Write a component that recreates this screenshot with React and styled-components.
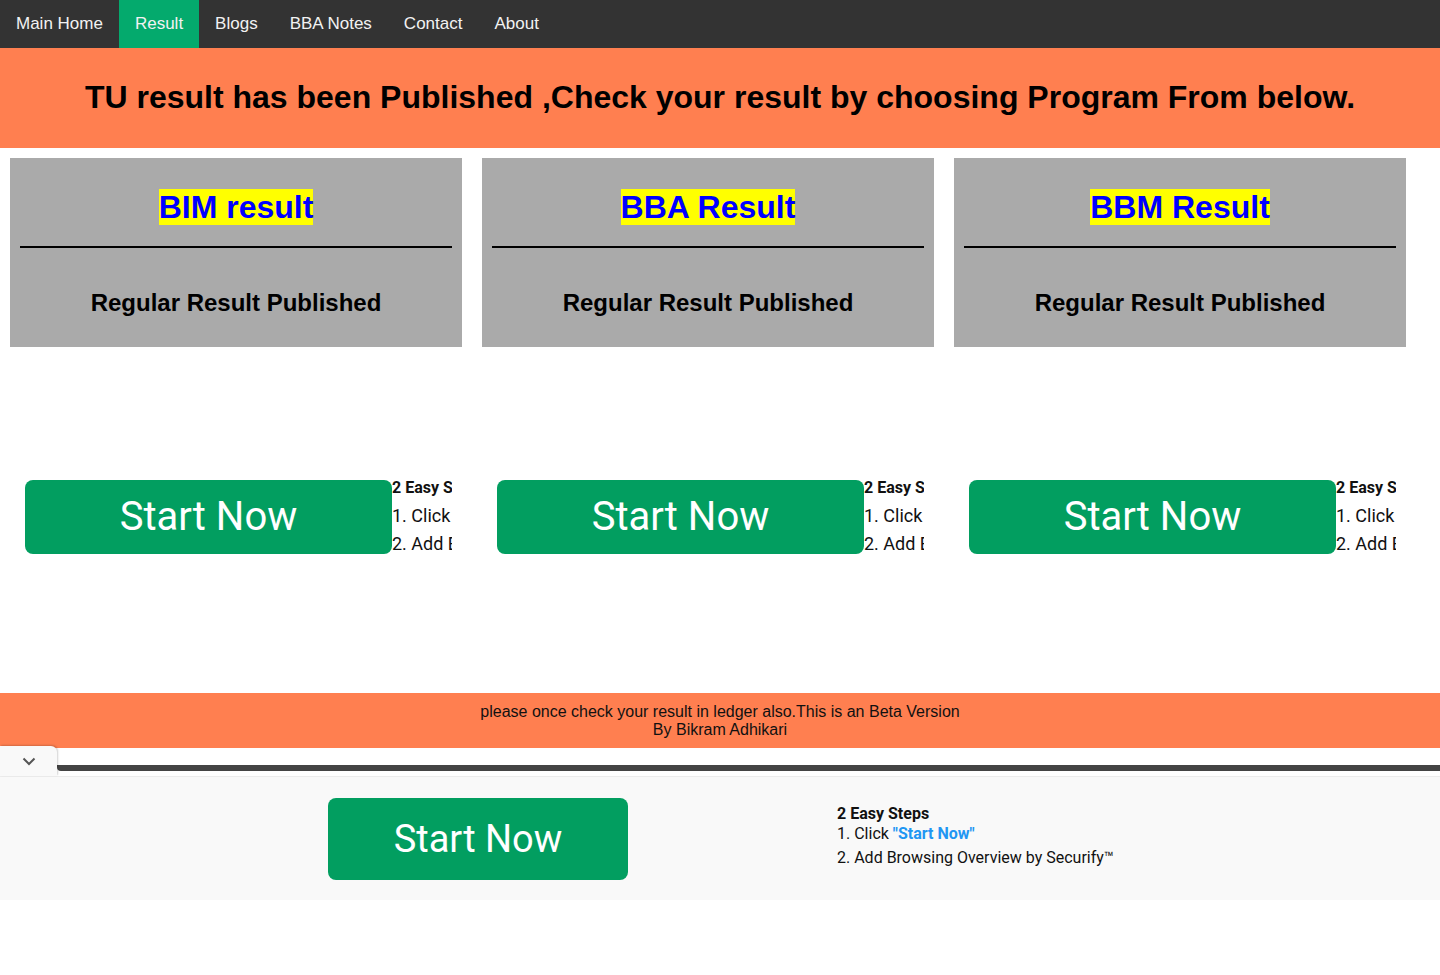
import React from "react";
import styled, { createGlobalStyle } from "styled-components";

const Global = createGlobalStyle`
  body {
    margin: 0;
    background: #fff;
    font-family: "Liberation Sans", Arial, sans-serif;
  }
  * { box-sizing: border-box; }
`;

//nav
const TopNav = styled.nav`
  display: flex;
  background: #333;
  height: 48px;
`;
const NavLink = styled.a`
  display: block;
  padding: 14px 16px;
  font-size: 17px;
  line-height: 20px;
  color: #f2f2f2;
  text-decoration: none;
  background: ${(p) => (p.$active ? "#04aa6d" : "transparent")};
`;

//banner
const Banner = styled.div`
  background: #ff7f50;
  height: 100px;
  display: flex;
  align-items: center;
  justify-content: center;
  h1 {
    margin: 0;
    font-size: 32px;
    line-height: 36px;
    font-weight: bold;
    color: #000;
    padding-bottom: 2px;
  }
`;

//cards
const Row = styled.div`
  display: flex;
  padding-top: 10px;
`;
const Column = styled.div`
  width: 472px;
  padding: 0 10px;
`;
const Card = styled.div`
  background: #aaa;
  padding: 10px;
  text-align: center;
`;
const Title = styled.h2`
  margin: 21px 0 0;
  font-size: 32px;
  line-height: 36px;
  a {
    color: #0000ff;
    background: #ffff00;
    text-decoration: none;
  }
`;
const Rule = styled.hr`
  margin: 21px 0 0;
  border: none;
  height: 2px;
  background: #000;
`;
const Sub = styled.h3`
  margin: 41px 0 20px;
  font-size: 24px;
  line-height: 28px;
  color: #000;
`;

//ad
const AdSlot = styled.div`
  height: 346px;
  margin: 0 10px;
  display: flex;
  align-items: center;
  overflow: hidden;
  padding-left: 5px;
  font-family: Roboto, "Liberation Sans", sans-serif;
`;
const AdRow = styled.div`
  display: flex;
  align-items: flex-start;
  margin-top: -3px;
`;
const StartButton = styled.a`
  flex: none;
  display: flex;
  align-items: center;
  justify-content: center;
  width: ${(p) => p.$w}px;
  height: ${(p) => p.$h}px;
  background: #029e60;
  border-radius: 8px;
  color: #fff;
  font-family: Roboto, sans-serif;
  font-size: ${(p) => p.$size}px;
  text-decoration: none;
`;
const Steps = styled.div`
  flex: none;
  white-space: nowrap;
  color: #111;
  font-size: ${(p) => p.$size}px;
  line-height: ${(p) => p.$lh}px;
  margin-top: ${(p) => p.$shift || 0}px;
`;
const StepHead = styled.div`
  font-size: 16px;
  font-weight: bold;
  line-height: ${(p) => p.$lh}px;
  margin-bottom: ${(p) => p.$gap}px;
`;
const StepLine = styled.div`
  margin-top: ${(p) => p.$gap || 0}px;
  span {
    color: #2196f3;
    font-weight: bold;
  }
`;

//footer
const Footer = styled.div`
  background: #ff7f50;
  text-align: center;
  font-size: 16px;
  line-height: 18px;
  padding: 10px 0 9px;
  color: #111;
`;

//bottom sticky ad
const Sticky = styled.div`
  background: #fff;
`;
const StickyTop = styled.div`
  display: flex;
  height: 28px;
`;
const Tab = styled.div`
  width: 57px;
  background: #f9f9f9;
  border-radius: 0 6px 0 0;
  box-shadow: 1px -1px 2px rgba(0, 0, 0, 0.18);
  display: flex;
  align-items: center;
  justify-content: center;
  position: relative;
  z-index: 1;
  margin-top: -2px;
  height: 30px;
`;
const TopRight = styled.div`
  flex: 1;
  display: flex;
  flex-direction: column;
`;
const WhiteStrip = styled.div`
  height: 17px;
  background: #fff;
`;
const DarkBar = styled.div`
  height: 6px;
  background: #444;
  border-radius: 0 0 0 4px;
`;
const Panel = styled.div`
  background: #f9f9f9;
  border-top: 1px solid #ececec;
  height: 124px;
  display: flex;
  align-items: center;
  padding-left: 328px;
  gap: 209px;
  font-family: Roboto, sans-serif;
`;

const programs = [
  { name: "BIM result" },
  { name: "BBA Result" },
  { name: "BBM Result" },
];

const navItems = ["Main Home", "Result", "Blogs", "BBA Notes", "Contact", "About"];

const StepsText = ({ size, lh, headLh, headGap, lineGap, shift }) => (
  <Steps $size={size} $lh={lh} $shift={shift}>
    <StepHead $lh={headLh} $gap={headGap}>2 Easy Steps</StepHead>
    <StepLine>
      1. Click <span>"Start Now"</span>
    </StepLine>
    <StepLine $gap={lineGap}>2. Add Browsing Overview by Securify™</StepLine>
  </Steps>
);

export default function App() {
  return (
    <>
      <Global />
      <TopNav>
        {navItems.map((n) => (
          <NavLink key={n} href="#" $active={n === "Result"}>
            {n}
          </NavLink>
        ))}
      </TopNav>
      <Banner>
        <h1>TU result has been Published ,Check your result by choosing Program From below.</h1>
      </Banner>
      <Row>
        {programs.map((p) => (
          <Column key={p.name}>
            <Card>
              <Title>
                <a href="#">{p.name}</a>
              </Title>
              <Rule />
              <Sub>Regular Result Published</Sub>
            </Card>
            <AdSlot>
              <AdRow>
                <StartButton href="#" $w={367} $h={74} $size={40}>
                  Start Now
                </StartButton>
                <StepsText size={18} lh={28} headLh={16} headGap={6} lineGap={0} />
              </AdRow>
            </AdSlot>
          </Column>
        ))}
      </Row>
      <Footer>
        please once check your result in ledger also.This is an Beta Version
        <br />
        By Bikram Adhikari
      </Footer>
      <Sticky>
        <StickyTop>
          <Tab>
            <svg width="14" height="9" viewBox="0 0 14 9" fill="none">
              <path d="M1.5 1.5 7 7l5.5-5.5" stroke="#555" strokeWidth="2" />
            </svg>
          </Tab>
          <TopRight>
            <WhiteStrip />
            <DarkBar />
          </TopRight>
        </StickyTop>
        <Panel>
          <StartButton href="#" $w={300} $h={82} $size={38}>
            Start Now
          </StartButton>
          <StepsText size={16} lh={20} headLh={20} headGap={0} lineGap={4} shift={-6} />
        </Panel>
      </Sticky>
    </>
  );
}
